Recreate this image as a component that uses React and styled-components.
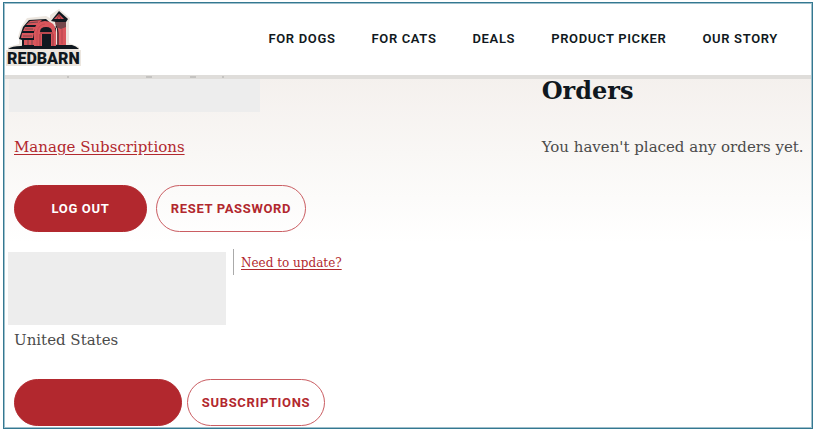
import React from "react";
import styled, { createGlobalStyle } from "styled-components";

const red = "#b2282e";
const ink = "#101820";
const slab = '"DejaVu Serif", serif';
const sans = 'Roboto, "Liberation Sans", sans-serif';

const GlobalStyle = createGlobalStyle`
  * { box-sizing: border-box; }
  body { margin: 0; background: #fff; overflow: hidden; }
`;

const Page = styled.div`
  min-height: calc(100vh - 3px);
  margin: 2px 1px 1px 3px;
  border: 1px solid #347891;
  outline: 1px solid #9fc0cc;
  outline-offset: -2px;
  background: linear-gradient(#f4f0ed 72px, #f9f7f5 150px, #fff 240px);
  font-family: ${slab};
  color: #4b4b4b;
`;

const Header = styled.header`
  display: flex;
  align-items: center;
  justify-content: space-between;
  height: 72px;
  padding: 0 34px 0 2px;
  background: #fff;
`;

const HeaderEdge = styled.div`
  height: 4px;
  background: #dfddda;
`;

const Remnants = styled.svg`
  display: block;
`;

const Home = styled.a`
  display: block;
  align-self: flex-start;
  padding-top: 5px;
`;

const Nav = styled.nav`
  display: flex;
  gap: 36px;
`;

const NavLink = styled.a`
  font: 600 13px/20px ${sans};
  letter-spacing: 0.05em;
  color: ${ink};
  text-decoration: none;
  white-space: nowrap;
`;

const Content = styled.main`
  display: grid;
  grid-template-columns: minmax(0, 2fr) minmax(0, 1fr);
`;

const Account = styled.section`
  padding-left: 10px;
`;

const Placeholder = styled.div`
  width: ${(p) => p.$width}px;
  height: ${(p) => p.$height}px;
  margin-left: ${(p) => (p.$wide ? -5 : -6)}px;
  background: #ededed;
`;

const TextLink = styled.a`
  display: inline-block;
  font-size: ${(p) => (p.$small ? 12 : 15)}px;
  line-height: 24px;
  color: ${red};
  text-underline-offset: 2px;
  white-space: nowrap;
`;

const ManageRow = styled.div`
  display: flex;
  padding: 23px 0 26px;
`;

const Buttons = styled.div`
  display: flex;
  gap: ${(p) => p.$gap}px;
`;

const Button = styled.button`
  width: ${(p) => p.$width}px;
  height: 47px;
  padding: 0;
  border: 1px solid ${(p) => (p.$solid ? red : "#ca5d62")};
  border-radius: 24px;
  background: ${(p) => (p.$solid ? red : "transparent")};
  color: ${(p) => (p.$solid ? "#fff" : red)};
  font: 700 13px/20px ${sans};
  letter-spacing: 0.05em;
`;

const AddressRow = styled.div`
  display: flex;
  align-items: flex-start;
  gap: 7px;
  margin-top: 17px;
`;

const AddressBlock = styled.div`
  padding-top: 3px;
`;

const Update = styled.div`
  height: 26px;
  padding: 2px 0 0 7px;
  border-left: 1px solid #aaa;
`;

const Body = styled.p`
  margin: 0;
  font-size: 15px;
  line-height: 24px;
  white-space: nowrap;
`;

const Country = styled(Body)`
  padding: 3px 0 27px;
`;

const Orders = styled.section`
  margin-left: -1px;
  white-space: nowrap;
`;

const Heading = styled.h2`
  margin: 0 0 32px;
  font: 900 24px/24px ${slab};
  color: ${ink};
`;

const navItems = ["FOR DOGS", "FOR CATS", "DEALS", "PRODUCT PICKER", "OUR STORY"];

function Logo() {
  return (
    <svg width="76" height="59" viewBox="0 0 76 59" role="img" aria-label="Redbarn">
      <path
        d="M0 42H2V39L13 36V31L12 29L15 19L21 10L40 8L44 10V7L53 1L64 10L63 14V35L73 39V42H75V58H0Z"
        fill="#ece6df"
      />
      <path d="M2 41Q6 38 15 38L23 36L60 37L66 37Q70 38 73 41Z" fill={ink} />
      <path d="M23 12L40 11L50 20V38H16V32L13 31L15 25L17 19Z" fill={ink} />
      <path
        d="M24 13L36 12L31 17H20ZM19 19H30L28 23H17ZM16 25H28L27 30H15ZM18 32H28V37H18Z"
        fill="#d9565c"
      />
      <path d="M22 15L32 14M19 21H27M17 28H26M22 32V37M26 32V37" stroke="#75474b" strokeWidth="1" />
      <path d="M28 38V24Q29 13 39 13Q49 13 50 24V38Z" fill="#d9565c" />
      <path d="M34 24Q34 19 40 19Q46 19 46 24Z" fill={ink} />
      <path d="M36 38V26H45V38Z" fill={ink} />
      <path d="M34 25H47M34 26V38M47 26V38" stroke="#9d3d43" strokeWidth="1" />
      <path d="M31 38V24Q33 16 39 16" fill="none" stroke="#c54c52" strokeWidth="1" />
      <path d="M49 13H60V37H51V21Z" fill="#d9565c" />
      <path d="M45 13L53 3L62 11L60 14H50Z" fill={ink} />
      <path d="M48 11L53 6L58 11Z" fill="#d9565c" />
      <path d="M51 11L53 7L55 11" fill="none" stroke="#8f3439" strokeWidth="1" />
      <path d="M49 14H60V19L55 21L50 19Z" fill="#75474b" />
      <path d="M50 18Q52 20 52 25V37" fill="none" stroke={ink} strokeWidth="1" />
      <path d="M56 21V36" stroke="#b5444a" strokeWidth="1" />
      <text x="1" y="56" fontFamily={sans} fontSize="16" fontWeight="900" fill={ink}>
        REDBARN
      </text>
    </svg>
  );
}

export default function App() {
  return (
    <>
      <GlobalStyle />
      <Page>
        <Header>
          <Home href="#home">
            <Logo />
          </Home>
          <Nav aria-label="Main">
            {navItems.map((item) => (
              <NavLink key={item} href="#shop">
                {item}
              </NavLink>
            ))}
          </Nav>
        </Header>
        <HeaderEdge>
          <Remnants width="240" height="4" aria-hidden="true">
            <path d="M63 2H65M142 2H148M186 2H192M218 2H220" stroke="#aaa9a7" strokeWidth="1" />
          </Remnants>
        </HeaderEdge>
        <Content>
          <Account>
            <Placeholder $wide $width={251} $height={33} />
            <ManageRow>
              <TextLink href="#subscriptions">Manage Subscriptions</TextLink>
            </ManageRow>
            <Buttons $gap={9}>
              <Button type="button" $solid $width={133}>LOG OUT</Button>
              <Button type="button" $width={150}>RESET PASSWORD</Button>
            </Buttons>
            <AddressRow>
              <AddressBlock>
                <Placeholder $width={218} $height={73} />
              </AddressBlock>
              <Update>
                <TextLink $small href="#address">Need to update?</TextLink>
              </Update>
            </AddressRow>
            <Country>United States</Country>
            <Buttons $gap={5}>
              <Button type="button" $solid $width={168} aria-label="Account" />
              <Button type="button" $width={138}>SUBSCRIPTIONS</Button>
            </Buttons>
          </Account>
          <Orders>
            <Heading>Orders</Heading>
            <Body>You haven't placed any orders yet.</Body>
          </Orders>
        </Content>
      </Page>
    </>
  );
}
